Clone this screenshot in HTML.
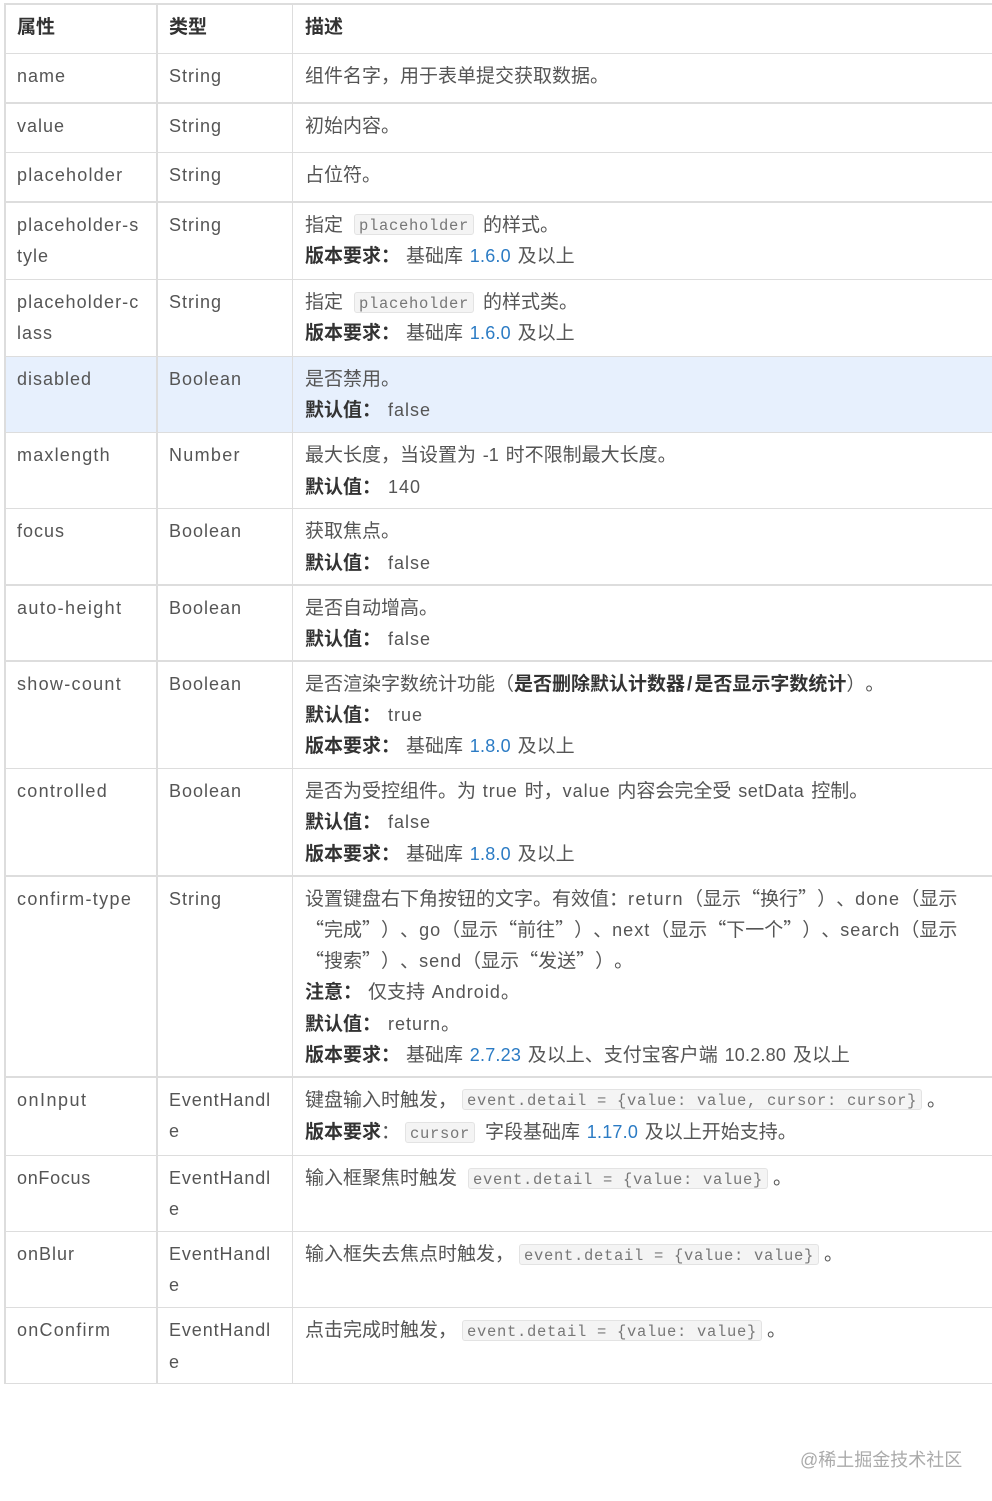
<!DOCTYPE html>
<html lang="zh-CN"><head><meta charset="utf-8"><style>
html,body{margin:0;padding:0;background:#fff}
#p{position:relative;width:992px;height:1501px;overflow:hidden;background:#fff;font-family:"Liberation Sans","Noto Sans CJK SC",sans-serif;font-size:19px;color:#555;text-spacing-trim:space-all;font-kerning:none}
#p div{position:absolute}
.h{left:4px;width:988px;height:1px;background:#ddd}
.k{height:2px}
.v{width:2px;background:#ddd}
.t{white-space:pre;line-height:31px;height:31px;word-spacing:1.5px}
.t:not(.l){margin-top:1px}
.l{letter-spacing:1px;font-size:18px}
.e{letter-spacing:1px;font-size:18px;line-height:0}
.n{letter-spacing:.2px;font-size:18px;line-height:0}
.q{font-family:"Noto Sans CJK SC",sans-serif;line-height:0}
b{color:#333;font-weight:700}
i{font-style:normal;color:#2b7bc4;font-size:18px;letter-spacing:.2px;line-height:0}
.c{font-family:"Liberation Mono",monospace;font-size:15.5px;letter-spacing:.7px;line-height:23px;height:19px;background:#f4f4f4;border:1px solid #e3e3e3;border-radius:3px;padding:0 4px;color:#777;white-space:pre}
</style></head><body><div id="p">
<div style="left:6px;top:357px;width:986px;height:75px;background:#e7f0fd"></div>
<div class="h k" style="top:3px"></div><div class="h" style="top:53px"></div><div class="h k" style="top:102px"></div><div class="h" style="top:152px"></div><div class="h k" style="top:201px"></div><div class="h" style="top:279px"></div><div class="h" style="top:356px"></div><div class="h" style="top:432px"></div><div class="h" style="top:508px"></div><div class="h k" style="top:584px"></div><div class="h k" style="top:660px"></div><div class="h" style="top:768px"></div><div class="h k" style="top:875px"></div><div class="h k" style="top:1076px"></div><div class="h" style="top:1155px"></div><div class="h" style="top:1231px"></div><div class="h" style="top:1307px"></div><div class="h" style="top:1383px"></div>
<div class="v" style="left:4px;top:3px;height:1381px"></div><div class="v" style="left:156px;top:3px;height:1381px"></div><div class="v" style="left:292px;top:3px;height:1381px;width:1px"></div>

<div class="t" style="left:17px;top:11px"><b>属性</b></div><div class="t" style="left:169px;top:11px"><b>类型</b></div><div class="t" style="left:305px;top:11px"><b>描述</b></div>

<div class="t l" style="left:17px;top:61px">name</div><div class="t l" style="left:169px;top:61px">String</div><div class="t" style="left:305px;top:60px">组件名字，用于表单提交获取数据。</div>
<div class="t l" style="left:17px;top:111px">value</div><div class="t l" style="left:169px;top:111px">String</div><div class="t" style="left:305px;top:110px">初始内容。</div>
<div class="t l" style="left:17px;top:160px;letter-spacing:1.2px">placeholder</div><div class="t l" style="left:169px;top:160px">String</div><div class="t" style="left:305px;top:159px">占位符。</div>

<div class="t l" style="left:17px;top:210px;letter-spacing:1.1px">placeholder-s</div><div class="t l" style="left:17px;top:241px">tyle</div><div class="t l" style="left:169px;top:210px">String</div>
<div class="t" style="left:305px;top:209px">指定</div><div class="c" style="left:354px;top:214px">placeholder</div><div class="t" style="left:483px;top:209px">的样式。</div>
<div class="t" style="left:305px;top:240px"><b>版本要求：</b></div><div class="t" style="left:406px;top:240px">基础库 <i>1.6.0</i> 及以上</div>

<div class="t l" style="left:17px;top:287px;letter-spacing:1.1px">placeholder-c</div><div class="t l" style="left:17px;top:318px">lass</div><div class="t l" style="left:169px;top:287px">String</div>
<div class="t" style="left:305px;top:286px">指定</div><div class="c" style="left:354px;top:292px">placeholder</div><div class="t" style="left:483px;top:286px">的样式类。</div>
<div class="t" style="left:305px;top:317px"><b>版本要求：</b></div><div class="t" style="left:406px;top:317px">基础库 <i>1.6.0</i> 及以上</div>

<div class="t l" style="left:17px;top:364px">disabled</div><div class="t l" style="left:169px;top:364px">Boolean</div><div class="t" style="left:305px;top:363px">是否禁用。</div>
<div class="t" style="left:305px;top:394px"><b>默认值：</b></div><div class="t l" style="left:388px;top:395px">false</div>

<div class="t l" style="left:17px;top:440px;letter-spacing:1.2px">maxlength</div><div class="t l" style="left:169px;top:440px;letter-spacing:1.3px">Number</div><div class="t" style="left:305px;top:439px">最大长度，当设置为 <span class="e" style="letter-spacing:0">-1</span> 时不限制最大长度。</div>
<div class="t" style="left:305px;top:471px"><b>默认值：</b></div><div class="t l" style="left:388px;top:472px">140</div>

<div class="t l" style="left:17px;top:516px">focus</div><div class="t l" style="left:169px;top:516px">Boolean</div><div class="t" style="left:305px;top:515px">获取焦点。</div>
<div class="t" style="left:305px;top:547px"><b>默认值：</b></div><div class="t l" style="left:388px;top:548px">false</div>

<div class="t l" style="left:17px;top:593px;letter-spacing:1.4px">auto-height</div><div class="t l" style="left:169px;top:593px">Boolean</div><div class="t" style="left:305px;top:592px">是否自动增高。</div>
<div class="t" style="left:305px;top:623px"><b>默认值：</b></div><div class="t l" style="left:388px;top:624px">false</div>

<div class="t l" style="left:17px;top:669px;letter-spacing:1.3px">show-count</div><div class="t l" style="left:169px;top:669px">Boolean</div><div class="t" style="left:305px;top:668px">是否渲染字数统计功能（<b>是否删除默认计数器<span style="padding:0 2px">/</span>是否显示字数统计</b>）。</div>
<div class="t" style="left:305px;top:699px"><b>默认值：</b></div><div class="t l" style="left:388px;top:700px">true</div>
<div class="t" style="left:305px;top:730px"><b>版本要求：</b></div><div class="t" style="left:406px;top:730px">基础库 <i>1.8.0</i> 及以上</div>

<div class="t l" style="left:17px;top:776px;letter-spacing:1.3px">controlled</div><div class="t l" style="left:169px;top:776px">Boolean</div><div class="t" style="left:305px;top:775px">是否为受控组件。为 <span class="e">true</span> 时，<span class="e">value</span> 内容会完全受 <span class="e" style="letter-spacing:.6px">setData</span> 控制。</div>
<div class="t" style="left:305px;top:806px"><b>默认值：</b></div><div class="t l" style="left:388px;top:807px">false</div>
<div class="t" style="left:305px;top:838px"><b>版本要求：</b></div><div class="t" style="left:406px;top:838px">基础库 <i>1.8.0</i> 及以上</div>

<div class="t l" style="left:17px;top:884px;letter-spacing:1.35px">confirm-type</div><div class="t l" style="left:169px;top:884px">String</div>
<div class="t" style="left:305px;top:883px">设置键盘右下角按钮的文字。有效值：<span class="e" style="letter-spacing:1.5px">return</span>（显示<span class="q">“</span>换行<span class="q">”</span>）、<span class="e" style="letter-spacing:1.3px">done</span>（显示</div>
<div class="t" style="left:305px;top:914px"><span class="q">“</span>完成<span class="q">”</span>）、<span class="e">go</span>（显示<span class="q">“</span>前往<span class="q">”</span>）、<span class="e">next</span>（显示<span class="q">“</span>下一个<span class="q">”</span>）、<span class="e">search</span>（显示</div>
<div class="t" style="left:305px;top:945px"><span class="q">“</span>搜索<span class="q">”</span>）、<span class="e">send</span>（显示<span class="q">“</span>发送<span class="q">”</span>）。</div>
<div class="t" style="left:305px;top:976px"><b>注意：</b></div><div class="t" style="left:368px;top:976px">仅支持 <span class="e">Android</span>。</div>
<div class="t" style="left:305px;top:1008px"><b>默认值：</b></div><div class="t" style="left:388px;top:1008px"><span class="e">return</span>。</div>
<div class="t" style="left:305px;top:1039px"><b>版本要求：</b></div><div class="t" style="left:406px;top:1039px">基础库 <i>2.7.23</i> 及以上、支付宝客户端 <span class="n">10.2.80</span> 及以上</div>

<div class="t l" style="left:17px;top:1085px;letter-spacing:1.5px">onInput</div><div class="t l" style="left:169px;top:1085px;letter-spacing:.9px">EventHandl</div><div class="t l" style="left:169px;top:1116px">e</div>
<div class="t" style="left:305px;top:1084px">键盘输入时触发，</div><div class="c" style="left:462px;top:1089px">event.detail = {value: value, cursor: cursor}</div><div class="t" style="left:927px;top:1084px">。</div>
<div class="t" style="left:305px;top:1116px"><b>版本要求</b>：</div><div class="c" style="left:405px;top:1122px">cursor</div><div class="t" style="left:485px;top:1116px">字段基础库 <i>1.17.0</i> 及以上开始支持。</div>

<div class="t l" style="left:17px;top:1163px;letter-spacing:.7px">onFocus</div><div class="t l" style="left:169px;top:1163px;letter-spacing:.9px">EventHandl</div><div class="t l" style="left:169px;top:1194px">e</div>
<div class="t" style="left:305px;top:1162px">输入框聚焦时触发</div><div class="c" style="left:468px;top:1168px">event.detail = {value: value}</div><div class="t" style="left:773px;top:1162px">。</div>

<div class="t l" style="left:17px;top:1239px">onBlur</div><div class="t l" style="left:169px;top:1239px;letter-spacing:.9px">EventHandl</div><div class="t l" style="left:169px;top:1270px">e</div>
<div class="t" style="left:305px;top:1238px">输入框失去焦点时触发，</div><div class="c" style="left:519px;top:1244px">event.detail = {value: value}</div><div class="t" style="left:824px;top:1238px">。</div>

<div class="t l" style="left:17px;top:1315px;letter-spacing:1.25px">onConfirm</div><div class="t l" style="left:169px;top:1315px;letter-spacing:.9px">EventHandl</div><div class="t l" style="left:169px;top:1347px">e</div>
<div class="t" style="left:305px;top:1314px">点击完成时触发，</div><div class="c" style="left:462px;top:1320px">event.detail = {value: value}</div><div class="t" style="left:767px;top:1314px">。</div>

<div class="t" style="left:800px;top:1444px;color:#aaa;font-size:18px">@稀土掘金技术社区</div>
</div></body></html>
